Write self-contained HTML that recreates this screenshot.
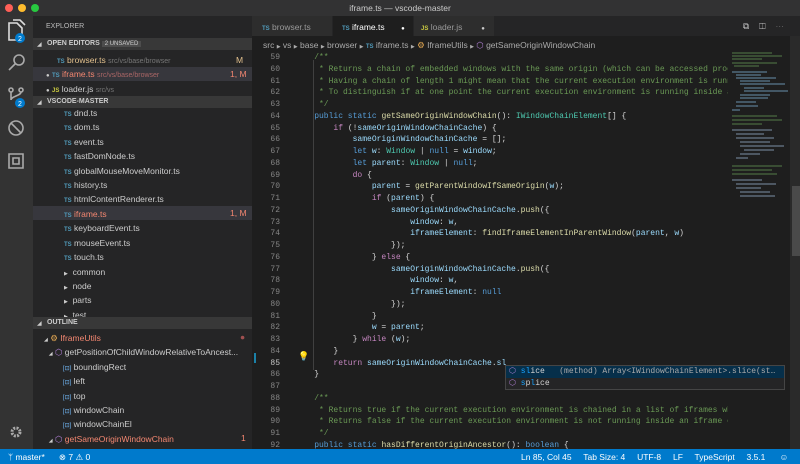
<!DOCTYPE html>
<html><head><meta charset="utf-8"><style>
*{margin:0;padding:0;box-sizing:border-box}
body{width:800px;height:464px;overflow:hidden;background:#1e1e1e;font-family:"Liberation Sans",sans-serif;position:relative;color:#ccc}
.a{position:absolute;white-space:pre}
.s{font-size:8.5px}
.sb span{line-height:0}
.code{font-family:"Liberation Mono",monospace;font-size:8px;color:#d4d4d4}
.c{color:#6a9955}.k{color:#569cd6}.p{color:#c586c0}.v{color:#9cdcfe}.f{color:#dcdcaa}.t{color:#4ec9b0}
.ln{font-family:"Liberation Mono",monospace;font-size:8px;color:#858585;width:30px;text-align:right;left:250px}
.ts{color:#519aba;font-size:6px;font-weight:bold}
.js{color:#cbcb41;font-size:6px;font-weight:bold}
.hd{position:absolute;left:33px;width:219px;height:12px;background:#383838;font-size:7px;font-weight:bold;color:#ccc;padding-left:14px;line-height:12px}
</style></head><body>
<!-- title bar -->
<div class="a" style="left:0;top:0;width:800px;height:16px;background:#323233"></div>
<div class="a" style="left:5px;top:4px;width:8px;height:8px;border-radius:50%;background:#fe5f57"></div>
<div class="a" style="left:18px;top:4px;width:8px;height:8px;border-radius:50%;background:#febc2e"></div>
<div class="a" style="left:31px;top:4px;width:8px;height:8px;border-radius:50%;background:#28c840"></div>
<div class="a s" style="left:0;width:800px;top:3px;text-align:center;color:#ccc">iframe.ts — vscode-master</div>
<!-- activity bar -->
<div class="a" style="left:0;top:16px;width:33px;height:433px;background:#333"></div>
<svg class="a" style="left:0;top:16px" width="33" height="433" fill="none" stroke="#aaa" stroke-width="1.6">
<path d="M9 7h8l5 5v12H9z M13 4h7l5 5" stroke="#ddd"/>
<circle cx="20" cy="22" r="5" fill="#007acc" stroke="none"/><text x="18" y="25" fill="#fff" stroke="none" font-size="7" font-family="Liberation Sans">2</text>
<circle cx="19" cy="44" r="5"/><path d="M15 48l-6 6"/>
<circle cx="11" cy="74" r="2"/><circle cx="21" cy="74" r="2"/><path d="M11 76v8M21 76c0 4-10 4-10 8"/>
<circle cx="20" cy="87" r="5" fill="#007acc" stroke="none"/><text x="18" y="90" fill="#fff" stroke="none" font-size="7" font-family="Liberation Sans">2</text>
<circle cx="16" cy="112" r="7"/><path d="M11 107l10 10"/>
<path d="M9 138h14v14H9z M13 142h6v6h-6z"/>
<circle cx="16" cy="416" r="4" stroke-width="3" stroke-dasharray="2 1.2"/>
</svg>
<!-- sidebar -->
<div class="a" style="left:33px;top:16px;width:219px;height:433px;background:#252526"></div>
<div class="a" style="left:46px;top:23px;font-size:7px;color:#bbb">EXPLORER</div>
<div class="hd" style="top:38px">OPEN EDITORS <span style="background:#4d4d4d;font-weight:normal;font-size:6px;padding:0 3px">2 UNSAVED</span></div>
<div class="a" style="left:37px;top:41px;font-size:6px">◢</div>
<div class="a s sb" style="left:57px;top:55px"><span class="ts">TS</span> <span style="color:#e2c08d">browser.ts</span> <span style="color:#777;font-size:7px">src/vs/base/browser</span></div>
<div class="a s" style="left:236px;top:55px;color:#e2c08d">M</div>
<div class="a" style="left:33px;top:67px;width:219px;height:14px;background:#37373d"></div>
<div class="a s sb" style="left:46px;top:69px"><span style="font-size:6px;color:#ccc">●</span> <span class="ts">TS</span> <span style="color:#f48771">iframe.ts</span> <span style="color:#a66;font-size:7px">src/vs/base/browser</span></div>
<div class="a s" style="left:230px;top:69px;color:#f48771">1, M</div>
<div class="a s sb" style="left:46px;top:84px"><span style="font-size:6px;color:#ccc">●</span> <span class="js">JS</span> <span>loader.js</span> <span style="color:#777;font-size:7px">src/vs</span></div>
<div class="hd" style="top:96px">VSCODE-MASTER</div>
<div class="a" style="left:37px;top:99px;font-size:6px">◢</div>
<div class="a s sb" style="left:64px;top:106px;line-height:14.4px"><span class="ts">TS</span> dnd.ts
<span class="ts">TS</span> dom.ts
<span class="ts">TS</span> event.ts
<span class="ts">TS</span> fastDomNode.ts
<span class="ts">TS</span> globalMouseMoveMonitor.ts
<span class="ts">TS</span> history.ts
<span class="ts">TS</span> htmlContentRenderer.ts</div>
<div class="a" style="left:33px;top:206px;width:219px;height:14px;background:#37373d"></div>
<div class="a s sb" style="left:64px;top:207px;line-height:14.4px"><span class="ts">TS</span> <span style="color:#f48771">iframe.ts</span>
<span class="ts">TS</span> keyboardEvent.ts
<span class="ts">TS</span> mouseEvent.ts
<span class="ts">TS</span> touch.ts
<span style="font-size:5px">▶</span>  common
<span style="font-size:5px">▶</span>  node
<span style="font-size:5px">▶</span>  parts
<span style="font-size:5px">▶</span>  test</div>
<div class="a s" style="left:230px;top:208px;color:#f48771">1, M</div>
<div class="hd" style="top:317px">OUTLINE</div>
<div class="a" style="left:37px;top:320px;font-size:6px">◢</div>
<div class="a s sb" style="left:44px;top:331px;line-height:14.4px"><span style="font-size:5px">◢</span> <span style="color:#e8ab53">⚙</span> <span style="color:#f48771">IframeUtils</span>
  <span style="font-size:5px">◢</span> <span style="color:#b180d7">⬡</span> getPositionOfChildWindowRelativeToAncest...
        <span style="color:#75beff;font-size:6px">[⊡]</span> boundingRect
        <span style="color:#75beff;font-size:6px">[⊡]</span> left
        <span style="color:#75beff;font-size:6px">[⊡]</span> top
        <span style="color:#75beff;font-size:6px">[⊡]</span> windowChain
        <span style="color:#75beff;font-size:6px">[⊡]</span> windowChainEl
  <span style="font-size:5px">◢</span> <span style="color:#b180d7">⬡</span> <span style="color:#f48771">getSameOriginWindowChain</span></div>
<div class="a s" style="left:240px;top:332px;color:#a05050">●</div>
<div class="a s" style="left:241px;top:433px;color:#f48771">1</div>
<!-- tabs -->
<div class="a" style="left:252px;top:16px;width:548px;height:20px;background:#252526"></div>
<div class="a" style="left:252px;top:16px;width:80px;height:20px;background:#2d2d2d"></div>
<div class="a" style="left:333px;top:16px;width:80px;height:20px;background:#1e1e1e"></div>
<div class="a" style="left:414px;top:16px;width:80px;height:20px;background:#2d2d2d"></div>
<div class="a s" style="left:262px;top:22px;color:#999"><span class="ts">TS</span> browser.ts</div>
<div class="a s" style="left:342px;top:22px;color:#fff"><span class="ts">TS</span> iframe.ts       <span style="font-size:6px">●</span></div>
<div class="a s" style="left:421px;top:22px;color:#999"><span class="js">JS</span> loader.js        <span style="font-size:6px;color:#ccc">●</span></div>
<div class="a s" style="left:743px;top:21px;color:#ccc;letter-spacing:10px">⧉◫⋯</div>
<!-- breadcrumbs -->
<div class="a s" style="left:263px;top:40px;color:#aaa">src <span style="font-size:5px">▶</span> vs <span style="font-size:5px">▶</span> base <span style="font-size:5px">▶</span> browser <span style="font-size:5px">▶</span> <span class="ts">TS</span> iframe.ts <span style="font-size:5px">▶</span> <span style="color:#e8ab53">⚙</span> IframeUtils <span style="font-size:5px">▶</span> <span style="color:#b180d7">⬡</span> getSameOriginWindowChain</div>
<!-- gutter numbers -->
<div class="a ln" style="top:52px;line-height:11.75px">59
60
61
62
63
64
65
66
67
68
69
70
71
72
73
74
75
76
77
78
79
80
81
82
83
84
<span style="color:#c6c6c6">85</span>
86
87
88
89
90
91
92</div>
<div class="a" style="left:254px;top:353px;width:2px;height:10px;background:#1b81a8"></div>
<div class="a" style="left:298px;top:351px;font-size:9px;color:#ddb100">💡</div>
<div class="a" style="left:313px;top:60px;width:1px;height:310px;background:#404040"></div>
<div class="a code" style="left:295px;top:52px;line-height:11.75px;width:433px;overflow:hidden"><span class="c">    /**
     * Returns a chain of embedded windows with the same origin (which can be accessed programmatically
     * Having a chain of length 1 might mean that the current execution environment is running
     * To distinguish if at one point the current execution environment is running inside a
     */</span>
    <span class="k">public static</span> <span class="f">getSameOriginWindowChain</span>(): <span class="t">IWindowChainElement</span>[] {
        <span class="p">if</span> (!<span class="v">sameOriginWindowChainCache</span>) {
            <span class="v">sameOriginWindowChainCache</span> = [];
            <span class="k">let</span> <span class="v">w</span>: <span class="t">Window</span> | <span class="k">null</span> = <span class="v">window</span>;
            <span class="k">let</span> <span class="v">parent</span>: <span class="t">Window</span> | <span class="k">null</span>;
            <span class="p">do</span> {
                <span class="v">parent</span> = <span class="f">getParentWindowIfSameOrigin</span>(<span class="v">w</span>);
                <span class="p">if</span> (<span class="v">parent</span>) {
                    <span class="v">sameOriginWindowChainCache</span>.<span class="f">push</span>({
                        <span class="v">window</span>: <span class="v">w</span>,
                        <span class="v">iframeElement</span>: <span class="f">findIframeElementInParentWindow</span>(<span class="v">parent</span>, <span class="v">w</span>)
                    });
                } <span class="p">else</span> {
                    <span class="v">sameOriginWindowChainCache</span>.<span class="f">push</span>({
                        <span class="v">window</span>: <span class="v">w</span>,
                        <span class="v">iframeElement</span>: <span class="k">null</span>
                    });
                }
                <span class="v">w</span> = <span class="v">parent</span>;
            } <span class="p">while</span> (<span class="v">w</span>);
        }
        <span class="p">return</span> <span class="v">sameOriginWindowChainCache</span>.<span class="v">sl</span>
    }

<span class="c">    /**
     * Returns true if the current execution environment is chained in a list of iframes which
     * Returns false if the current execution environment is not running inside an iframe or
     */</span>
    <span class="k">public static</span> <span class="f">hasDifferentOriginAncestor</span>(): <span class="k">boolean</span> {</div>
<!-- minimap -->
<svg class="a" style="left:728px;top:50px" width="62" height="200">
<g stroke-width="1.2">
<path d="M4 3h40M4 6h50M4 9h30M4 13h45M6 16h25" stroke="#4a6a40"/>
<path d="M4 22h35M8 25h25M8 28h40M12 31h30M12 34h45M16 38h20M16 41h44M12 45h30M12 48h28M8 52h20M8 56h22M4 60h8" stroke="#5a7a90"/>
<path d="M4 66h45M4 70h50M4 74h30" stroke="#4a6a40"/>
<path d="M4 80h40M8 84h28M8 88h38M12 92h30M12 96h44M16 100h30M12 104h20M8 108h12" stroke="#6a7a8a"/>
<path d="M4 116h50M4 120h40M4 124h45" stroke="#4a6a40"/>
<path d="M4 130h30M8 134h40M8 138h25M12 142h30M12 146h35" stroke="#6a7a8a"/>
</g></svg>
<div class="a" style="left:790px;top:36px;width:10px;height:413px;background:#2a2a2a"></div>
<div class="a" style="left:792px;top:186px;width:8px;height:70px;background:#4a4a4a"></div>
<!-- suggest -->
<div class="a" style="left:505px;top:365px;width:280px;height:25px;background:#252526;border:1px solid #454545"></div>
<div class="a" style="left:506px;top:366px;width:278px;height:11.5px;background:#062f4a"></div>
<div class="a code" style="left:509px;top:366px;line-height:11.5px"><span style="color:#b180d7">⬡</span> <span style="color:#18a3ff">sl</span>ice   <span style="color:#aaa">(method) Array&lt;IWindowChainElement&gt;.slice(st…</span>
<span style="color:#b180d7">⬡</span> <span style="color:#18a3ff">s</span>p<span style="color:#18a3ff">l</span>ice</div>
<!-- status bar -->
<div class="a" style="left:0;top:449px;width:800px;height:15px;background:#007acc"></div>
<div class="a s" style="left:8px;top:452px;color:#fff">ᛘ master*      ⊗ 7 ⚠ 0</div>
<div class="a s" style="left:521px;top:452px;color:#fff">Ln 85, Col 45     Tab Size: 4     UTF-8     LF     TypeScript     3.5.1      ☺      🔔</div>
</body></html>
